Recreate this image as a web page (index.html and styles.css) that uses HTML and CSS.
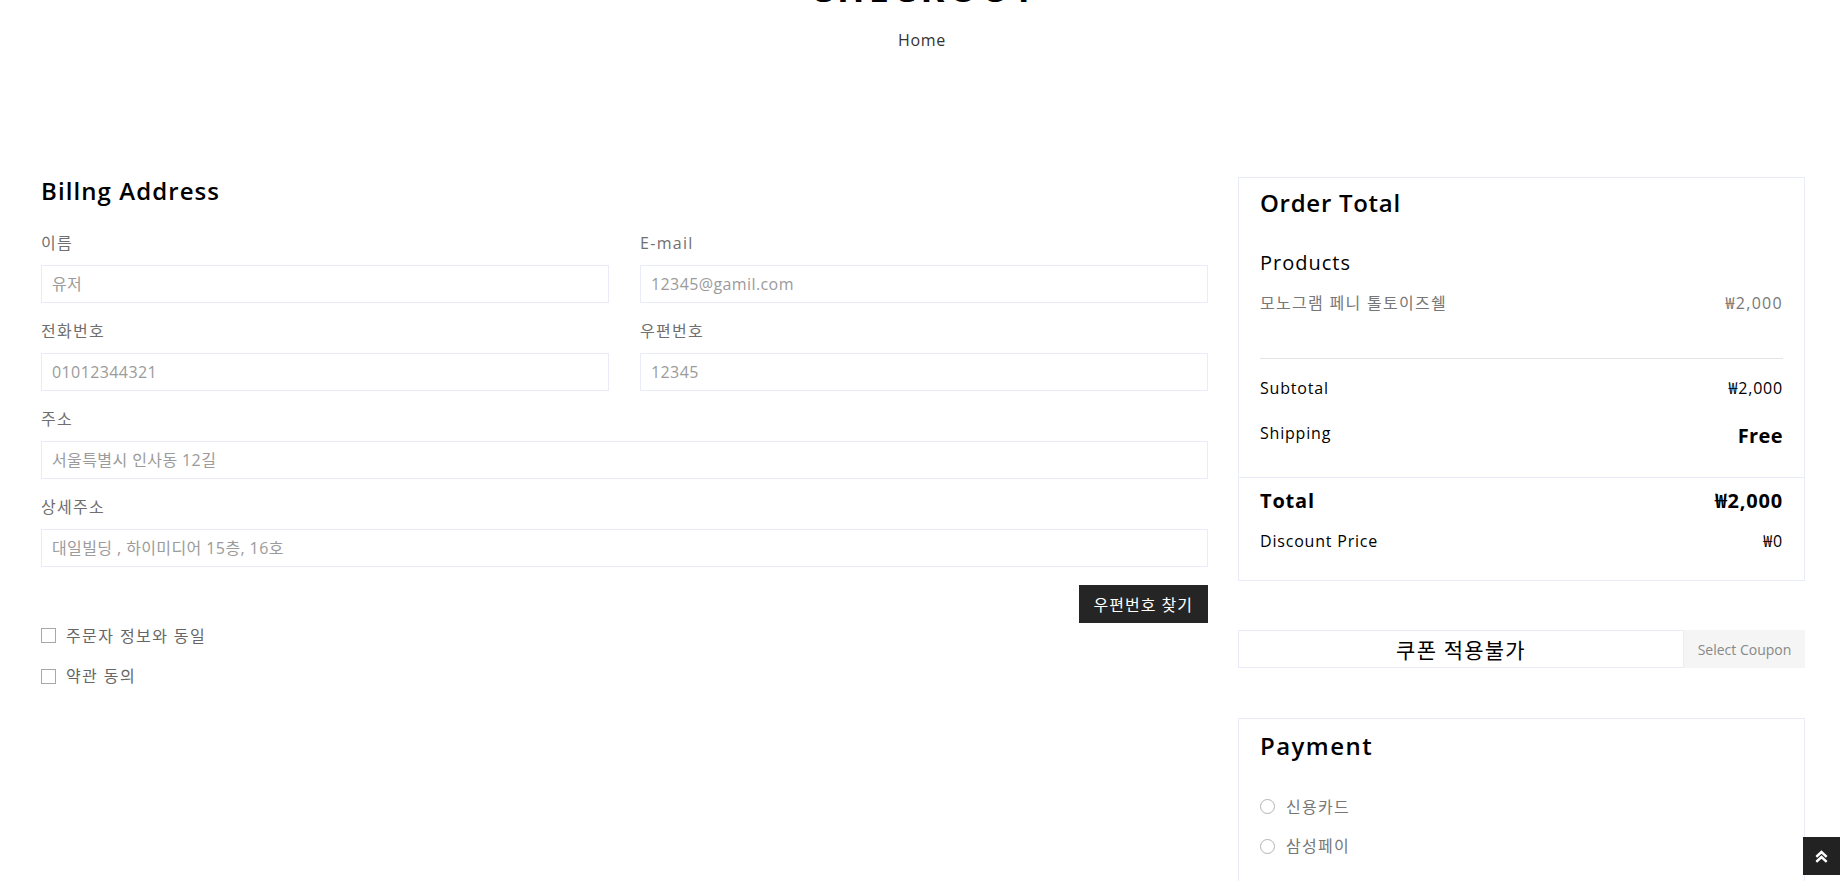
FILE: index.html
```html
<!DOCTYPE html>
<html lang="ko">
<head>
<meta charset="utf-8">
<title>Checkout</title>
<link rel="stylesheet" href="styles.css">
</head>
<body>
<header class="page-title">
  <h1>CHECKOUT</h1>
  <p class="crumb">Home</p>
</header>

<main class="checkout">
  <section class="billing">
    <h3 class="sec-title">Billng Address</h3>
    <div class="fields">
      <div class="field">
        <label>이름</label>
        <input type="text" placeholder="유저">
      </div>
      <div class="field">
        <label>E-mail</label>
        <input type="text" placeholder="12345@gamil.com">
      </div>
      <div class="field">
        <label>전화번호</label>
        <input type="text" placeholder="01012344321">
      </div>
      <div class="field">
        <label>우편번호</label>
        <input type="text" placeholder="12345">
      </div>
      <div class="field wide">
        <label>주소</label>
        <input type="text" placeholder="서울특별시 인사동 12길">
      </div>
      <div class="field wide">
        <label>상세주소</label>
        <input type="text" placeholder="대일빌딩 , 하이미디어 15층, 16호">
      </div>
    </div>
    <div class="actions">
      <button class="btn-dark" type="button">우편번호 찾기</button>
    </div>
    <div class="checks">
      <label class="check"><span class="box"></span>주문자 정보와 동일</label>
      <label class="check"><span class="box"></span>약관 동의</label>
    </div>
  </section>

  <aside class="summary">
    <div class="card order">
      <div class="order-main">
        <h3 class="card-title">Order Total</h3>
        <h4 class="products-title">Products</h4>
        <div class="line-item">
          <span>모노그램 페니 톨토이즈쉘</span>
          <span>₩2,000</span>
        </div>
        <div class="divider"></div>
        <div class="sum-row sub">
          <span>Subtotal</span>
          <span>₩2,000</span>
        </div>
        <div class="sum-row ship">
          <span>Shipping</span>
          <span class="free">Free</span>
        </div>
      </div>
      <div class="order-total">
        <div class="sum-row total-row">
          <span>Total</span>
          <span>₩2,000</span>
        </div>
        <div class="sum-row discount-row">
          <span>Discount Price</span>
          <span>₩0</span>
        </div>
      </div>
    </div>

    <div class="coupon">
      <div class="coupon-field">쿠폰 적용불가</div>
      <button class="coupon-btn" type="button">Select Coupon</button>
    </div>

    <div class="card payment">
      <h3 class="card-title">Payment</h3>
      <div class="pay-options">
        <label class="pay-option"><span class="radio"></span>신용카드</label>
        <label class="pay-option"><span class="radio"></span>삼성페이</label>
      </div>
    </div>
  </aside>
</main>

<a class="to-top" href="#">
  <svg width="13" height="13" viewBox="0 0 13 13" aria-hidden="true">
    <path d="M2.2 6 L6.5 2 L10.8 6" fill="none" stroke="#fff" stroke-width="2.4" stroke-linecap="square"/>
    <path d="M2.2 11 L6.5 7 L10.8 11" fill="none" stroke="#fff" stroke-width="2.4" stroke-linecap="square"/>
  </svg>
</a>
</body>
</html>
```

FILE: styles.css
```css
html, body {
  margin: 0;
  padding: 0;
}

body {
  font-family: "Open Sans", "Noto Sans CJK KR", sans-serif;
  color: #000;
  background: #fff;
  overflow: hidden;
}

.page-title {
  text-align: center;
}

.page-title h1 {
  margin: -31px 0 0;
  padding-left: 4px;
  font-size: 36px;
  line-height: 40px;
  font-weight: 700;
  letter-spacing: 4.3px;
  color: #000;
}

.crumb {
  margin: 19px 0 0;
  font-size: 16px;
  line-height: 24px;
  letter-spacing: 0.04em;
  color: #333;
}

.checkout {
  display: grid;
  grid-template-columns: 1fr 567px;
  column-gap: 30px;
  padding: 0 39px 0 41px;
  margin-top: 125px;
  align-items: start;
}

.sec-title {
  margin: 0 0 26px;
  font-size: 24px;
  line-height: 28.8px;
  font-weight: 600;
  letter-spacing: 0.045em;
}

.fields {
  display: grid;
  grid-template-columns: 1fr 1fr;
  column-gap: 31px;
  row-gap: 17px;
}

.field.wide {
  grid-column: 1 / -1;
}

.field label {
  display: block;
  font-size: 16px;
  line-height: 22px;
  letter-spacing: 1.3px;
  color: #6f6f6f;
  margin-bottom: 11px;
}

.field input {
  display: block;
  box-sizing: border-box;
  width: 100%;
  height: 38px;
  margin: 0;
  border: 1px solid #e9ecf8;
  border-radius: 0;
  padding: 0 10px;
  font-family: "Open Sans", "Noto Sans CJK KR", sans-serif;
  font-size: 16px;
  letter-spacing: 0.4px;
  color: #333;
  background: #fff;
  outline: none;
}

.field input::placeholder {
  color: #9b9b9b;
}

.actions {
  display: flex;
  justify-content: flex-end;
  margin-top: 18px;
}

.btn-dark {
  height: 38px;
  padding: 0 15px;
  background: #252525;
  color: #fff;
  border: 0;
  border-radius: 0;
  font-family: "Open Sans", "Noto Sans CJK KR", sans-serif;
  font-size: 16px;
  letter-spacing: 1px;
  cursor: pointer;
}

.checks {
  margin-top: 2px;
  display: flex;
  flex-direction: column;
  gap: 18.6px;
}

.check {
  display: flex;
  align-items: center;
  gap: 10px;
  font-size: 16px;
  line-height: 22px;
  letter-spacing: 1.4px;
  color: #666;
}

.box {
  width: 15px;
  height: 15px;
  box-sizing: border-box;
  border: 1px solid #a8a8a8;
  background: #fff;
}

/* summary */

.card {
  border: 1px solid #e9ecf8;
}

.order-main {
  padding: 11px 21px 26px;
}

.card-title {
  margin: 0;
  font-size: 24px;
  line-height: 28.8px;
  font-weight: 600;
  letter-spacing: 0.03em;
}

.payment .card-title {
  letter-spacing: 0.06em;
}

.products-title {
  margin: 33px 0 0;
  font-size: 20px;
  line-height: 23.3px;
  font-weight: 500;
  letter-spacing: 0.05em;
}

.line-item {
  display: flex;
  justify-content: space-between;
  margin-top: 18px;
  font-size: 16px;
  line-height: 22px;
  letter-spacing: 1.3px;
  color: #777;
}

.divider {
  height: 1px;
  background: #e4e4e4;
  margin-top: 44px;
}

.sum-row {
  display: flex;
  justify-content: space-between;
  align-items: flex-start;
  font-size: 16px;
  line-height: 24px;
  letter-spacing: 0.05em;
}

.sum-row.sub {
  margin-top: 17px;
}

.sum-row.ship {
  margin-top: 21.4px;
}

.free {
  font-size: 20px;
  line-height: 30px;
  font-weight: 700;
  letter-spacing: 0.02em;
}

.order-total {
  border-top: 1px solid #e9ecf8;
  padding: 9px 21px 26.5px;
}

.total-row {
  font-size: 20px;
  line-height: 28px;
  font-weight: 700;
  letter-spacing: 0.04em;
}

.discount-row {
  margin-top: 14px;
}

.coupon {
  display: flex;
  height: 38px;
  margin-top: 49.5px;
}

.coupon-field {
  flex: 1;
  box-sizing: border-box;
  border: 1px solid #e9ecf8;
  display: flex;
  align-items: center;
  justify-content: center;
  font-size: 21px;
  letter-spacing: 1.2px;
  color: #000;
}

.coupon-btn {
  width: 121px;
  border: 0;
  border-radius: 0;
  background: #f5f5f5;
  color: #888;
  font-family: "Open Sans", sans-serif;
  font-size: 14px;
  cursor: pointer;
}

.payment {
  margin-top: 49.5px;
  padding: 13px 21px 40px;
}

.pay-options {
  margin-top: 35px;
  display: flex;
  flex-direction: column;
  gap: 17.3px;
}

.pay-option {
  display: flex;
  align-items: center;
  gap: 11px;
  font-size: 16px;
  line-height: 22px;
  letter-spacing: 1.3px;
  color: #777;
}

.radio {
  width: 15px;
  height: 15px;
  box-sizing: border-box;
  border: 1px solid #b3b3b3;
  border-radius: 50%;
  background: #fff;
}

.to-top {
  position: fixed;
  right: 4px;
  bottom: 6px;
  width: 37px;
  height: 38px;
  background: #222;
  display: flex;
  align-items: center;
  justify-content: center;
}
```
